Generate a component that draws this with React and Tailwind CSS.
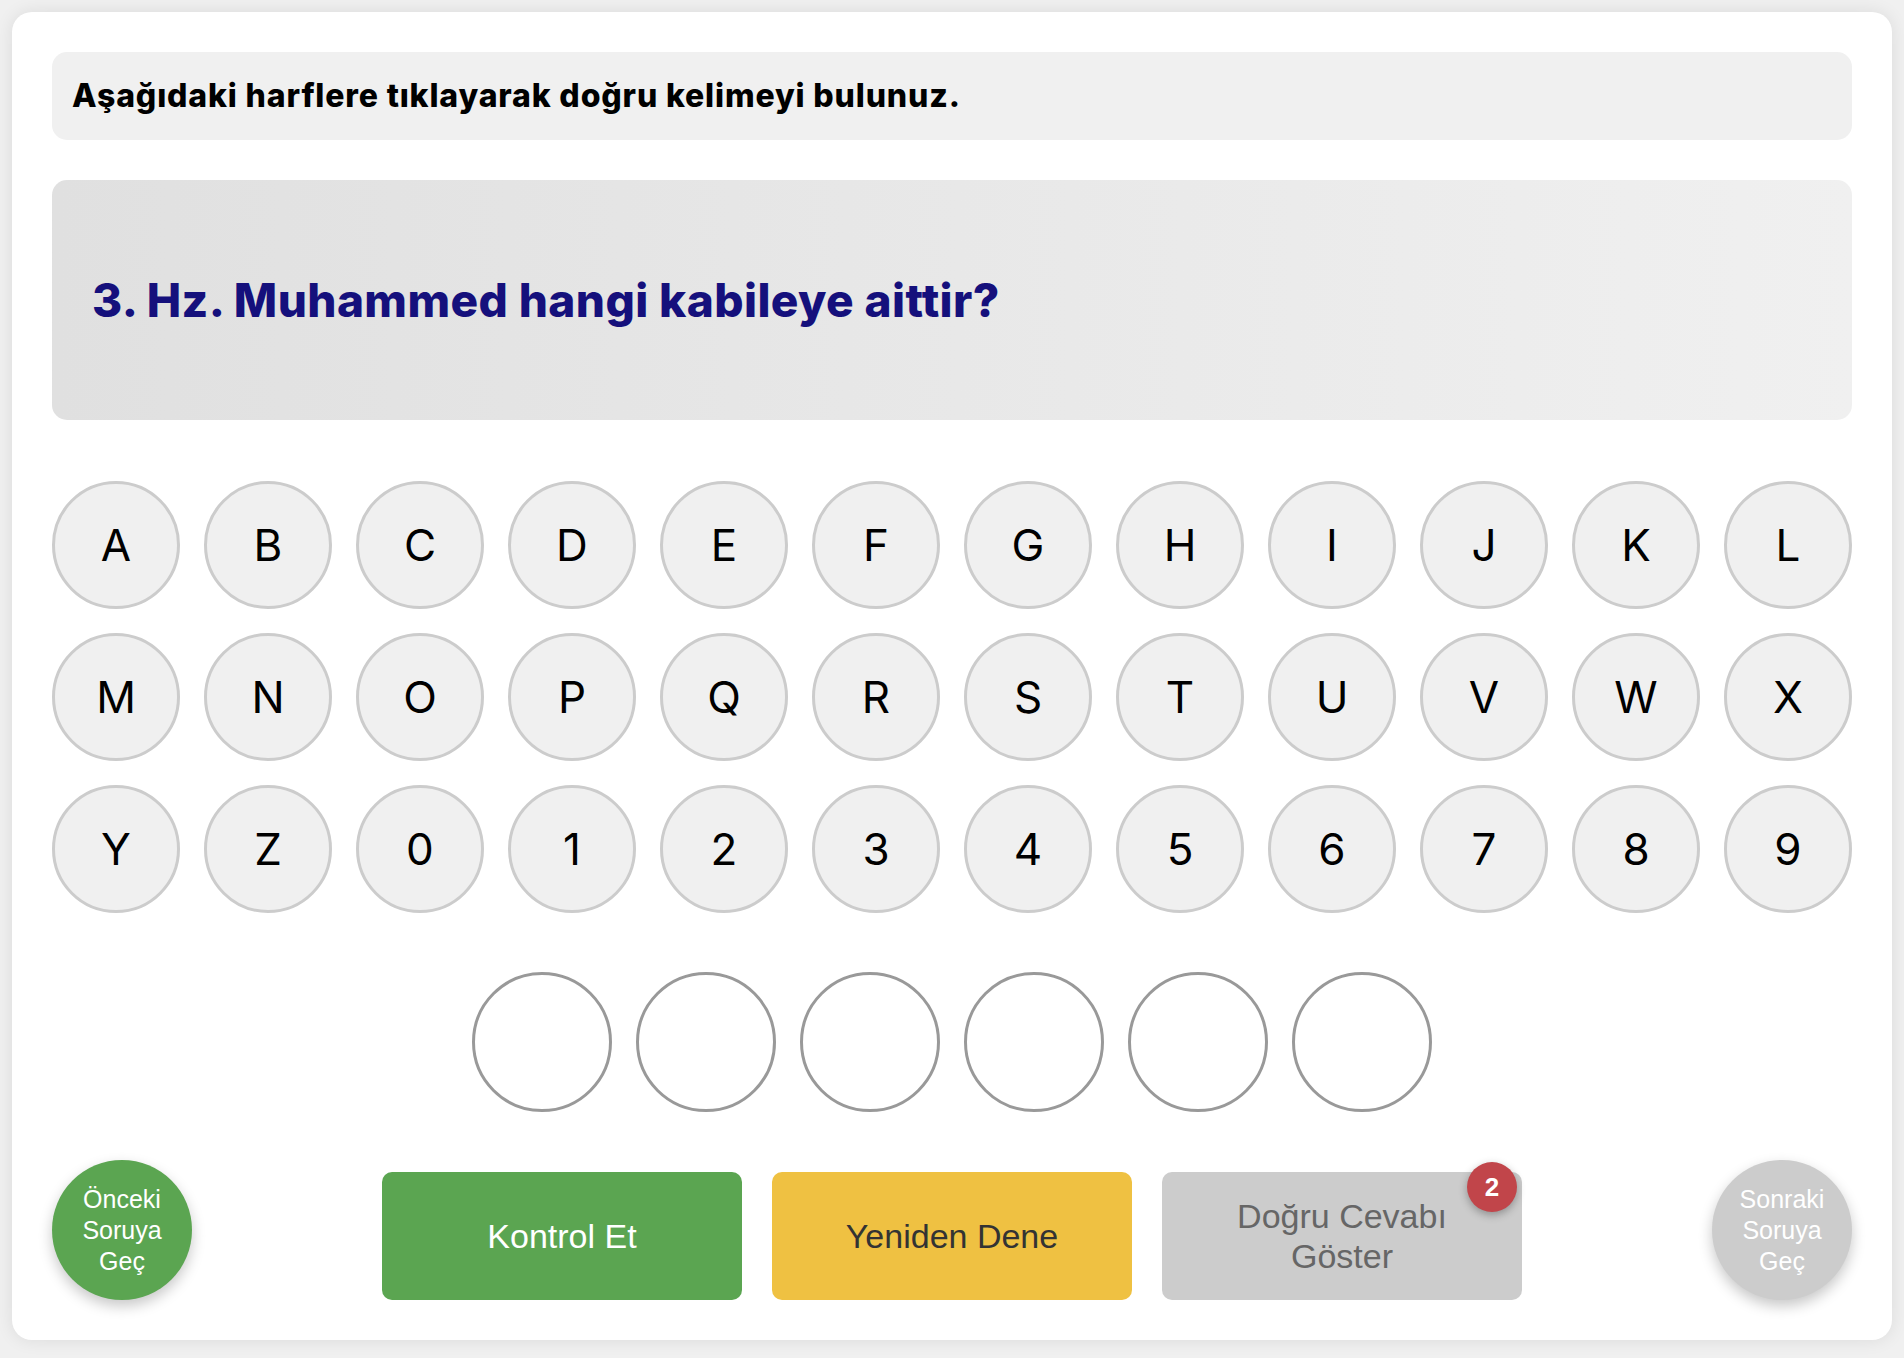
import React from 'react';

const KEYS = [
    'A', 'B', 'C', 'D', 'E', 'F', 'G', 'H', 'I', 'J', 'K', 'L',
    'M', 'N', 'O', 'P', 'Q', 'R', 'S', 'T', 'U', 'V', 'W', 'X',
    'Y', 'Z', '0', '1', '2', '3', '4', '5', '6', '7', '8', '9',
];

const SLOTS = 6;

const geo = { fontFamily: 'Inter, "Open Sans", "DejaVu Sans", sans-serif' };
const arial = { fontFamily: '"Liberation Sans", Arial, sans-serif' };

const NavCircle = ({ label, active }) => (
    <button
        className={`w-[140px] h-[140px] rounded-full flex items-center justify-center text-center text-[25px] leading-[31px] text-white shadow-[0_6px_14px_rgba(0,0,0,0.22)] ${active ? 'bg-[#5ba551]' : 'bg-[#cccccc]'}`}
        style={arial}
    >
        <span>{label[0]}<br />{label[1]}<br />{label[2]}</span>
    </button>
);

export default function App() {
    return (
        <div className="min-h-screen bg-[#f0f0f0] p-3">
            <div className="bg-white rounded-[20px] shadow-[0_0_18px_rgba(0,0,0,0.09)] p-10">

                {/* Instruction */}
                <div className="h-[88px] bg-[#f0f0f0] rounded-[15px] flex items-center px-5">
                    <p className="text-[32px] font-extrabold tracking-[0.85px] text-black" style={geo}>
                        Aşağıdaki harflere tıklayarak doğru kelimeyi bulunuz.
                    </p>
                </div>

                {/* Question */}
                <div className="mt-10 h-[240px] rounded-[15px] bg-linear-to-r from-[#e0e0e0] to-[#f0f0f0] flex items-center px-10">
                    <h2 className="text-[46px] font-extrabold tracking-[0.4px] text-[#15107c]" style={geo}>
                        3. Hz. Muhammed hangi kabileye aittir?
                    </h2>
                </div>

                {/* Letter keys */}
                <div className="mt-[61px] grid grid-cols-12 gap-6">
                    {KEYS.map((k) => (
                        <button
                            key={k}
                            className="aspect-square rounded-full border-[3px] border-[#cccccc] bg-[#f0f0f0] flex items-center justify-center text-[44px] text-black"
                            style={geo}
                        >
                            {k}
                        </button>
                    ))}
                </div>

                {/* Answer slots */}
                <div className="mt-[59px] flex justify-center gap-6">
                    {Array.from({ length: SLOTS }).map((_, i) => (
                        <div key={i} className="w-[140px] h-[140px] rounded-full border-[3px] border-[#999999] bg-white" />
                    ))}
                </div>

                {/* Actions */}
                <div className="mt-12 flex items-end justify-between">
                    <NavCircle label={['Önceki', 'Soruya', 'Geç']} active />

                    <div className="flex gap-[30px]" style={arial}>
                        <button className="w-[360px] h-[128px] rounded-[10px] bg-[#5ba551] text-white text-[34px]">
                            Kontrol Et
                        </button>
                        <button className="w-[360px] h-[128px] rounded-[10px] bg-[#efc142] text-[#333333] text-[34px]">
                            Yeniden Dene
                        </button>
                        <div className="relative">
                            <button className="w-[360px] h-[128px] rounded-[10px] bg-[#cccccc] text-[#666666] text-[34px] leading-[40px] px-8">
                                Doğru Cevabı<br />Göster
                            </button>
                            <span className="absolute -top-[10px] right-[5px] w-[50px] h-[50px] rounded-full bg-[#c1454a] text-white font-bold text-[26px] flex items-center justify-center shadow-[0_3px_8px_rgba(0,0,0,0.3)]">
                                2
                            </span>
                        </div>
                    </div>

                    <NavCircle label={['Sonraki', 'Soruya', 'Geç']} />
                </div>
            </div>
        </div>
    );
}
